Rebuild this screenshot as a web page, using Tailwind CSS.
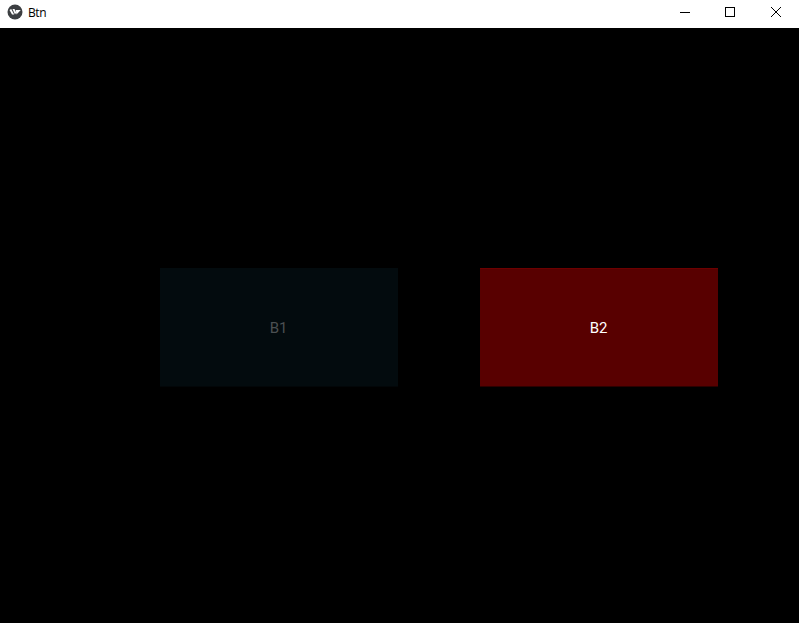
<!DOCTYPE html>
<html lang="en"><head><meta charset="utf-8"><title>Btn</title>
<script src="https://cdn.jsdelivr.net/npm/@tailwindcss/browser@4"></script></head>
<body class="flex h-screen flex-col overflow-hidden bg-black">
<header class="flex h-7 shrink-0 items-start bg-white pl-[7px] text-black">
<svg class="mt-1 h-4 w-4 shrink-0" viewBox="0 0 16 16"><circle cx="8" cy="8" r="7.5" fill="#3c3f42"/><path d="M2.500 6 4.200 5 7.200 10.500H5ZM5.500 5h2L9.200 8.500 8 10.500ZM8.800 6h5L9.500 10.500Z" fill="#fff"/></svg>
<span class="mt-[5px] ml-[5px] font-['Open_Sans',sans-serif] text-[12px] leading-4 tracking-[-0.4px]">Btn</span>
<div class="ml-auto flex">
<svg class="h-6 w-[45px]" viewBox="0 0 45 24" fill="none" stroke="#000" shape-rendering="crispEdges"><path d="M18 12.500h10"/></svg>
<svg class="h-6 w-[46px]" viewBox="0 0 46 24" fill="none" stroke="#000" shape-rendering="crispEdges"><path d="M18.500 7.500h9v9h-9Z"/></svg>
<svg class="h-6 w-[46px]" viewBox="0 0 46 24" fill="none" stroke="#000"><path d="m18 7 10 10M28 7 18 17"/></svg>
</div>
</header>
<main class="flex flex-1 gap-[82px] pt-60 pl-40">
<button class="h-[119px] w-[238px] border-b border-[#020608] bg-[#030b0e] pt-0.5 pr-px font-[Roboto,sans-serif] text-[15px] tracking-[-0.2px] text-[#4b5052]">B1</button>
<button class="h-[119px] w-[238px] border-t border-b border-t-[#6c0000] border-b-[#2c0000] bg-[#580000] pt-px pr-px font-[Roboto,sans-serif] text-[15px] tracking-[-0.2px] text-white">B2</button>
</main>
</body></html>
